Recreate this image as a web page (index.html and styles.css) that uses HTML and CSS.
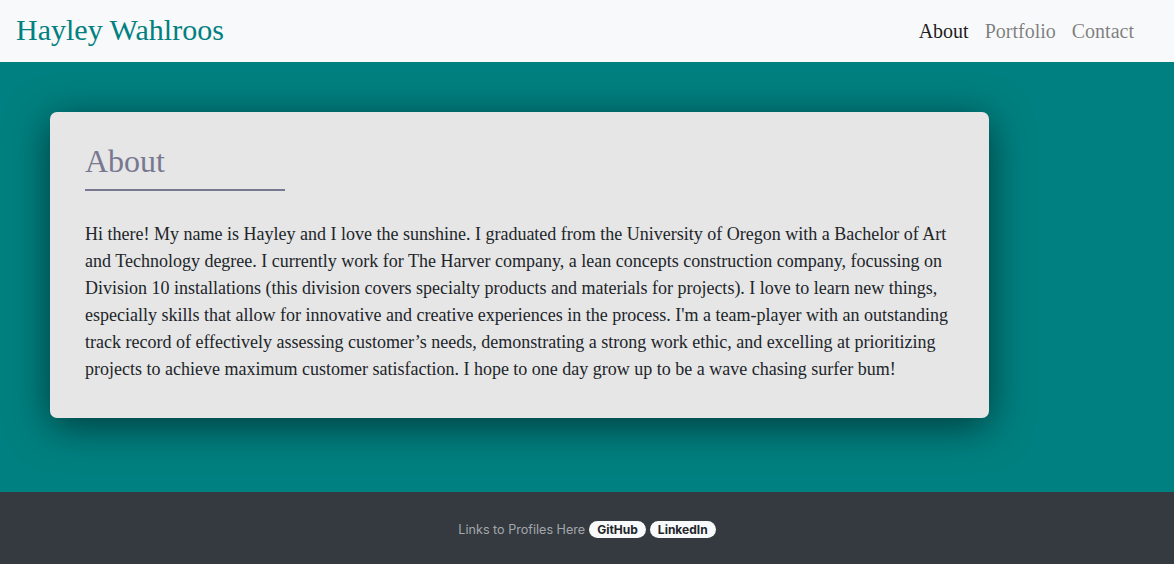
FILE: index.html
```html
<!DOCTYPE html>
<html lang="en">
<head>
<meta charset="utf-8">
<title>Hayley Wahlroos</title>
<link rel="stylesheet" href="styles.css">
</head>
<body>
<header class="navbar">
  <a class="brand" href="#">Hayley Wahlroos</a>
  <nav class="nav">
    <a class="nav-link active" href="#">About</a>
    <a class="nav-link" href="#">Portfolio</a>
    <a class="nav-link" href="#">Contact</a>
  </nav>
</header>
<main class="section">
  <div class="card">
    <h2 class="card-title">About</h2>
    <div class="title-rule"></div>
    <p class="card-text">Hi there! My name is Hayley and I love the sunshine. I graduated from the University of Oregon with a Bachelor of Art and Technology degree. I currently work for The Harver company, a lean concepts construction company, focussing on Division 10 installations (this division covers specialty products and materials for projects). I love to learn new things, especially skills that allow for innovative and creative experiences in the process. I'm a team-player with an outstanding track record of effectively assessing customer’s needs, demonstrating a strong work ethic, and excelling at prioritizing projects to achieve maximum customer satisfaction. I hope to one day grow up to be a wave chasing surfer bum!</p>
  </div>
</main>
<footer class="footer">
  <span class="footer-text">Links to Profiles Here</span>
  <a class="badge" href="#">GitHub</a>
  <a class="badge" href="#">LinkedIn</a>
</footer>
</body>
</html>
```

FILE: styles.css
```css
* { box-sizing: border-box; }
html, body { margin: 0; padding: 0; }
body {
  font-family: "Liberation Serif", "Times New Roman", serif;
  color: #212529;
  background: #008080;
}
a { text-decoration: none; }

.navbar {
  height: 62px;
  background: #f8f9fa;
  display: flex;
  align-items: center;
  justify-content: space-between;
  padding: 0 32px 0 16px;
}
.brand {
  font-size: 30px;
  color: #008080;
  line-height: 1;
  padding-bottom: 2px;
}
.nav { display: flex; }
.nav-link {
  font-size: 20px;
  color: rgba(0, 0, 0, 0.5);
  padding: 0 8px;
}
.nav-link.active { color: rgba(0, 0, 0, 0.9); }

.section {
  background: #008080;
  height: 430px;
  padding: 50px 0 0 50px;
}
.card {
  width: 939px;
  background: #e6e6e6;
  border-radius: 7px;
  box-shadow: 0 8px 40px rgba(0, 0, 0, 0.55);
  padding: 30px 35px 20px 35px;
  height: 306px;
}
.card-title {
  margin: 0;
  font-size: 32px;
  font-weight: 400;
  line-height: 1.2;
  color: #787891;
}
.title-rule {
  width: 200px;
  height: 2px;
  background: #787891;
  margin-top: 9px;
}
.card-text {
  margin: 30px 0 0 0;
  font-size: 18px;
  line-height: 27px;
  color: #212529;
}

.footer {
  height: 72px;
  background: #343a40;
  display: flex;
  align-items: center;
  justify-content: center;
  gap: 4px;
  font-family: Inter, "Liberation Sans", sans-serif;
  padding-top: 2px;
}
.footer-text {
  font-size: 12.6px;
  color: #a3a7ab;
}
.badge {
  font-size: 12px;
  font-weight: 700;
  color: #212529;
  background: #f8f9fa;
  border-radius: 10px;
  padding: 2px 8px;
  line-height: 13px;
}
```
